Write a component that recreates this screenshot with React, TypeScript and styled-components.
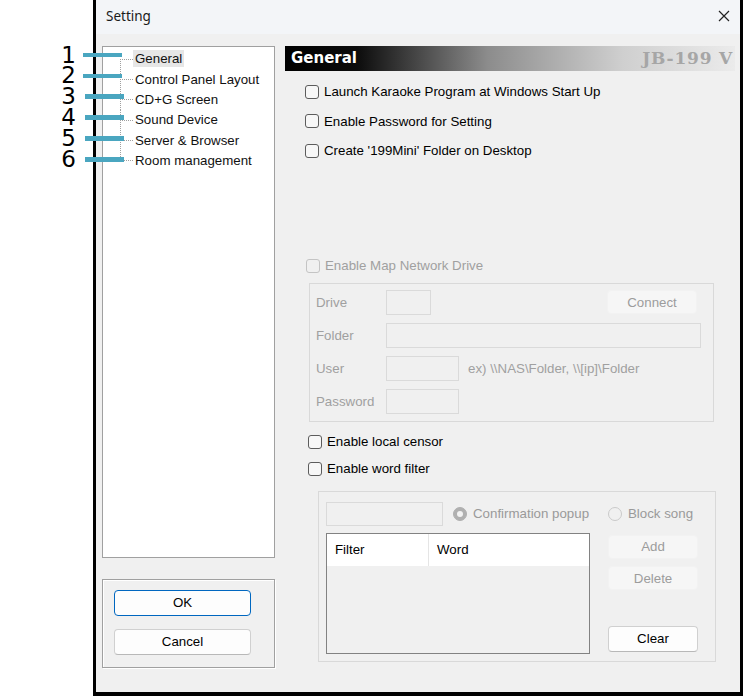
import styled, { createGlobalStyle } from "styled-components";

const GlobalStyle = createGlobalStyle`
  html, body {
    margin: 0;
    padding: 0;
    background: #fff;
  }
  body {
    font-family: "Liberation Sans", Arial, sans-serif;
    font-size: 13.3px;
    color: #000;
  }
  * {
    box-sizing: border-box;
  }
`;

const Page = styled.div`
  display: flex;
  width: 743px;
  height: 696px;
  overflow: hidden;
`;

/* annotation numbers on the left with the cyan pointers */
const Notes = styled.div`
  position: relative;
  z-index: 2;
  flex: none;
  width: 93px;
  padding: 44.5px 17px 0 0;
  display: flex;
  flex-direction: column;
`;

const Note = styled.div<{ $reach: number }>`
  position: relative;
  height: 20.9px;
  line-height: 20.9px;
  text-align: right;
  font-family: "DejaVu Sans", sans-serif;
  font-size: 23px;
  color: #000;

  &::after {
    content: "";
    position: absolute;
    top: 8.2px;
    left: ${(p) => p.$reach}px;
    width: 39px;
    height: 4.5px;
    background: #4aa6c0;
  }
`;

const Dialog = styled.div`
  flex: none;
  width: 650px;
  height: 696px;
  border: 3px solid #000;
  border-top: 0;
  border-bottom-width: 4px;
  background: #f0f0f0;
  display: flex;
  flex-direction: column;
`;

const TitleBar = styled.div`
  flex: none;
  height: 34px;
  padding: 0 10px 2px 10px;
  display: flex;
  align-items: center;
  justify-content: space-between;
  background: #f3f5f8;
  font-family: "Noto Sans", sans-serif;
  font-size: 13.5px;
  color: #1a1a1a;
`;

const CloseIcon = () => (
  <svg width="12" height="12" viewBox="0 0 12 12">
    <path d="M1 1 L11 11 M11 1 L1 11" stroke="#222" strokeWidth="1.2" fill="none" />
  </svg>
);

const Body = styled.div`
  flex: 1;
  display: flex;
  gap: 10px;
  padding: 11.7px 5px 0 6px;
`;

const LeftCol = styled.div`
  flex: none;
  width: 173px;
  display: flex;
  flex-direction: column;
`;

const TreeBox = styled.ul`
  list-style: none;
  margin: 0;
  height: 512px;
  padding: 2px 0 0 0;
  background: #fff;
  border: 1px solid #a0a0a0;
`;

const dotsV = `linear-gradient(to bottom, #a0a0a0 50%, transparent 50%)`;
const dotsH = `linear-gradient(to right, #a0a0a0 50%, transparent 50%)`;

const TreeItem = styled.li<{ $first?: boolean; $last?: boolean }>`
  position: relative;
  height: 20.3px;
  display: flex;
  align-items: center;
  padding-left: 30px;

  &::before {
    content: "";
    position: absolute;
    left: 17px;
    width: 1px;
    top: ${(p) => (p.$first ? "50%" : "0")};
    bottom: ${(p) => (p.$last ? "50%" : "0")};
    background-image: ${dotsV};
    background-size: 1px 2px;
  }
  &::after {
    content: "";
    position: absolute;
    left: 17px;
    top: 50%;
    width: 13px;
    height: 1px;
    background-image: ${dotsH};
    background-size: 2px 1px;
  }
`;

const TreeLabel = styled.span<{ $selected?: boolean }>`
  padding: 1px 2px;
  line-height: 15px;
  background: ${(p) => (p.$selected ? "#e6e6e6" : "transparent")};
  color: #111;
`;

const ButtonBox = styled.div`
  margin-top: 21px;
  height: 89px;
  border: 1px solid #a0a0a0;
  box-shadow: inset 1px 1px 0 #fff, 1px 1px 0 #fff;
  padding: 10px 0 0 11px;
  display: flex;
  flex-direction: column;
  gap: 13px;
`;

const DialogButton = styled.button<{ $default?: boolean }>`
  width: 137px;
  height: 26px;
  padding: 0;
  font: inherit;
  color: #000;
  background: #fdfdfd;
  border: 1px solid ${(p) => (p.$default ? "#0067c0" : "#d0d0d0")};
  border-bottom-color: ${(p) => (p.$default ? "#0067c0" : "#b8b8b8")};
  border-radius: 4px;
`;

const RightCol = styled.div`
  flex: 1;
  display: flex;
  flex-direction: column;
`;

const Header = styled.div`
  height: 25px;
  display: flex;
  align-items: center;
  justify-content: space-between;
  padding: 0 2px 0 6px;
  background: linear-gradient(
    90deg,
    #000 0%,
    #0c0c0c 16%,
    #8c8c8c 45%,
    #cfcfcf 75%,
    #ebebeb 100%
  );
`;

const HeaderTitle = styled.span`
  font-family: "DejaVu Sans", sans-serif;
  font-weight: bold;
  font-size: 15px;
  color: #fff;
`;

const Brand = styled.span`
  font-family: "DejaVu Serif", serif;
  font-weight: bold;
  font-size: 17px;
  letter-spacing: 0.8px;
  color: #a6a6a6;
`;

const CheckList = styled.div`
  margin-top: 11px;
  display: flex;
  flex-direction: column;
  gap: 9.5px;
`;

const CheckRow = styled.label<{ $indent: number; $top?: number; $disabled?: boolean }>`
  height: 20px;
  margin-left: ${(p) => p.$indent}px;
  margin-top: ${(p) => p.$top ?? 0}px;
  display: flex;
  align-items: center;
  gap: 5px;
  color: ${(p) => (p.$disabled ? "#a0a0a0" : "#000")};
`;

const Box = styled.span<{ $disabled?: boolean }>`
  flex: none;
  width: 14px;
  height: 14px;
  border-radius: 3px;
  border: 1px solid ${(p) => (p.$disabled ? "#c4c4c4" : "#5c5c5c")};
  background: ${(p) => (p.$disabled ? "#f0f0f0" : "#f7f7f7")};
`;

const Group = styled.div<{ $left: number; $top: number }>`
  margin: ${(p) => p.$top}px 0 0 ${(p) => p.$left}px;
  border: 1px solid #d9d9d9;
`;

const DriveGrid = styled(Group)`
  width: 405px;
  padding: 6px 12px 7px 6px;
  display: grid;
  grid-template-columns: 70px 1fr;
  grid-auto-rows: 25px;
  row-gap: 8px;
  align-items: center;
  color: #a0a0a0;
`;

const FieldCell = styled.div`
  display: flex;
  align-items: center;
  height: 25px;
`;

const Field = styled.div<{ $width?: number }>`
  width: ${(p) => (p.$width ? `${p.$width}px` : "100%")};
  height: 25px;
  flex: none;
  border: 1px solid #dadada;
  background: #f0f0f0;
`;

const Hint = styled.span`
  margin-left: 9px;
  color: #a0a0a0;
`;

const PlainButton = styled.button<{ $enabled?: boolean }>`
  width: 90px;
  height: ${(p) => (p.$enabled ? "26px" : "24px")};
  padding: 0;
  font: inherit;
  border-radius: 4px;
  color: ${(p) => (p.$enabled ? "#000" : "#9c9c9c")};
  background: ${(p) => (p.$enabled ? "#fdfdfd" : "#f6f6f6")};
  border: 1px solid ${(p) => (p.$enabled ? "#d0d0d0" : "#f2f2f2")};
  border-bottom-color: ${(p) => (p.$enabled ? "#b8b8b8" : "#f2f2f2")};
`;

const ConnectButton = styled(PlainButton)`
  margin-left: auto;
  margin-right: 4px;
`;

const FilterGroup = styled(Group)`
  width: 398px;
  padding: 10px 17px 7px 7px;
  display: flex;
  flex-direction: column;
  gap: 7px;
`;

const FilterTop = styled.div`
  display: flex;
  align-items: center;
  height: 24px;
`;

const RadioRow = styled.span<{ $width?: number; $gap: number }>`
  display: flex;
  align-items: center;
  gap: 6px;
  margin-left: ${(p) => p.$gap}px;
  width: ${(p) => (p.$width ? `${p.$width}px` : "auto")};
  color: #9a9a9a;
`;

const RadioDot = styled.span<{ $checked?: boolean }>`
  flex: none;
  position: relative;
  width: 14px;
  height: 14px;
  border-radius: 50%;
  background: ${(p) => (p.$checked ? "#b0b0b0" : "#f0f0f0")};
  border: 1px solid ${(p) => (p.$checked ? "#b0b0b0" : "#cacaca")};

  &::after {
    content: "";
    display: ${(p) => (p.$checked ? "block" : "none")};
    position: absolute;
    left: 3px;
    top: 3px;
    width: 6px;
    height: 6px;
    border-radius: 50%;
    background: #f2f2f2;
  }
`;

const FilterMain = styled.div`
  display: flex;
  height: 121px;
`;

const ListBox = styled.div`
  width: 264px;
  height: 121px;
  border: 1px solid #828282;
  background: #f0f0f0;
`;

const ListHead = styled.div`
  display: flex;
  height: 32px;
  background: #fff;
`;

const HeadCell = styled.div<{ $width?: number }>`
  width: ${(p) => (p.$width ? `${p.$width}px` : "auto")};
  flex: ${(p) => (p.$width ? "none" : "1")};
  display: flex;
  align-items: center;
  padding-left: 8px;
  border-right: ${(p) => (p.$width ? "1px solid #e5e5e5" : "0")};
`;

const SideButtons = styled.div`
  margin-left: auto;
  width: 90px;
  padding: 2px 0 2px 0;
  display: flex;
  flex-direction: column;
  gap: 7.5px;

  & > :last-child {
    margin-top: auto;
  }
`;

const tree = [
  "General",
  "Control Panel Layout",
  "CD+G Screen",
  "Sound Device",
  "Server & Browser",
  "Room management",
];

const generalChecks = [
  "Launch Karaoke Program at Windows Start Up",
  "Enable Password for Setting",
  "Create '199Mini' Folder on Desktop",
];

export default function App() {
  return (
    <>
      <GlobalStyle />
      <Page>
        <Notes>
          {tree.map((_, i) => (
            <Note key={i} $reach={i < 2 ? 83 : 85}>
              {i + 1}
            </Note>
          ))}
        </Notes>

        <Dialog>
          <TitleBar>
            <span>Setting</span>
            <CloseIcon />
          </TitleBar>

          <Body>
            <LeftCol>
              <TreeBox>
                {tree.map((t, i) => (
                  <TreeItem key={t} $first={i === 0} $last={i === tree.length - 1}>
                    <TreeLabel $selected={i === 0}>{t}</TreeLabel>
                  </TreeItem>
                ))}
              </TreeBox>
              <ButtonBox>
                <DialogButton $default>OK</DialogButton>
                <DialogButton>Cancel</DialogButton>
              </ButtonBox>
            </LeftCol>

            <RightCol>
              <Header>
                <HeaderTitle>General</HeaderTitle>
                <Brand>JB-199 V</Brand>
              </Header>

              <CheckList>
                {generalChecks.map((c) => (
                  <CheckRow key={c} $indent={20}>
                    <Box />
                    {c}
                  </CheckRow>
                ))}
              </CheckList>

              <CheckRow $indent={21} $top={95} $disabled>
                <Box $disabled />
                Enable Map Network Drive
              </CheckRow>

              <DriveGrid $left={24} $top={7}>
                <span>Drive</span>
                <FieldCell>
                  <Field $width={45} />
                  <ConnectButton>Connect</ConnectButton>
                </FieldCell>
                <span>Folder</span>
                <FieldCell>
                  <Field />
                </FieldCell>
                <span>User</span>
                <FieldCell>
                  <Field $width={73} />
                  <Hint>ex) \\NAS\Folder, \\[ip]\Folder</Hint>
                </FieldCell>
                <span>Password</span>
                <FieldCell>
                  <Field $width={73} />
                </FieldCell>
              </DriveGrid>

              <CheckRow $indent={23} $top={10}>
                <Box />
                Enable local censor
              </CheckRow>
              <CheckRow $indent={23} $top={7}>
                <Box />
                Enable word filter
              </CheckRow>

              <FilterGroup $left={33} $top={12}>
                <FilterTop>
                  <Field $width={117} style={{ height: 24 }} />
                  <RadioRow $gap={10}>
                    <RadioDot $checked />
                    Confirmation popup
                  </RadioRow>
                  <RadioRow $gap={0} $width={90} style={{ marginLeft: "auto" }}>
                    <RadioDot />
                    Block song
                  </RadioRow>
                </FilterTop>
                <FilterMain>
                  <ListBox>
                    <ListHead>
                      <HeadCell $width={102}>Filter</HeadCell>
                      <HeadCell>Word</HeadCell>
                    </ListHead>
                  </ListBox>
                  <SideButtons>
                    <PlainButton>Add</PlainButton>
                    <PlainButton>Delete</PlainButton>
                    <PlainButton $enabled>Clear</PlainButton>
                  </SideButtons>
                </FilterMain>
              </FilterGroup>
            </RightCol>
          </Body>
        </Dialog>
      </Page>
    </>
  );
}
